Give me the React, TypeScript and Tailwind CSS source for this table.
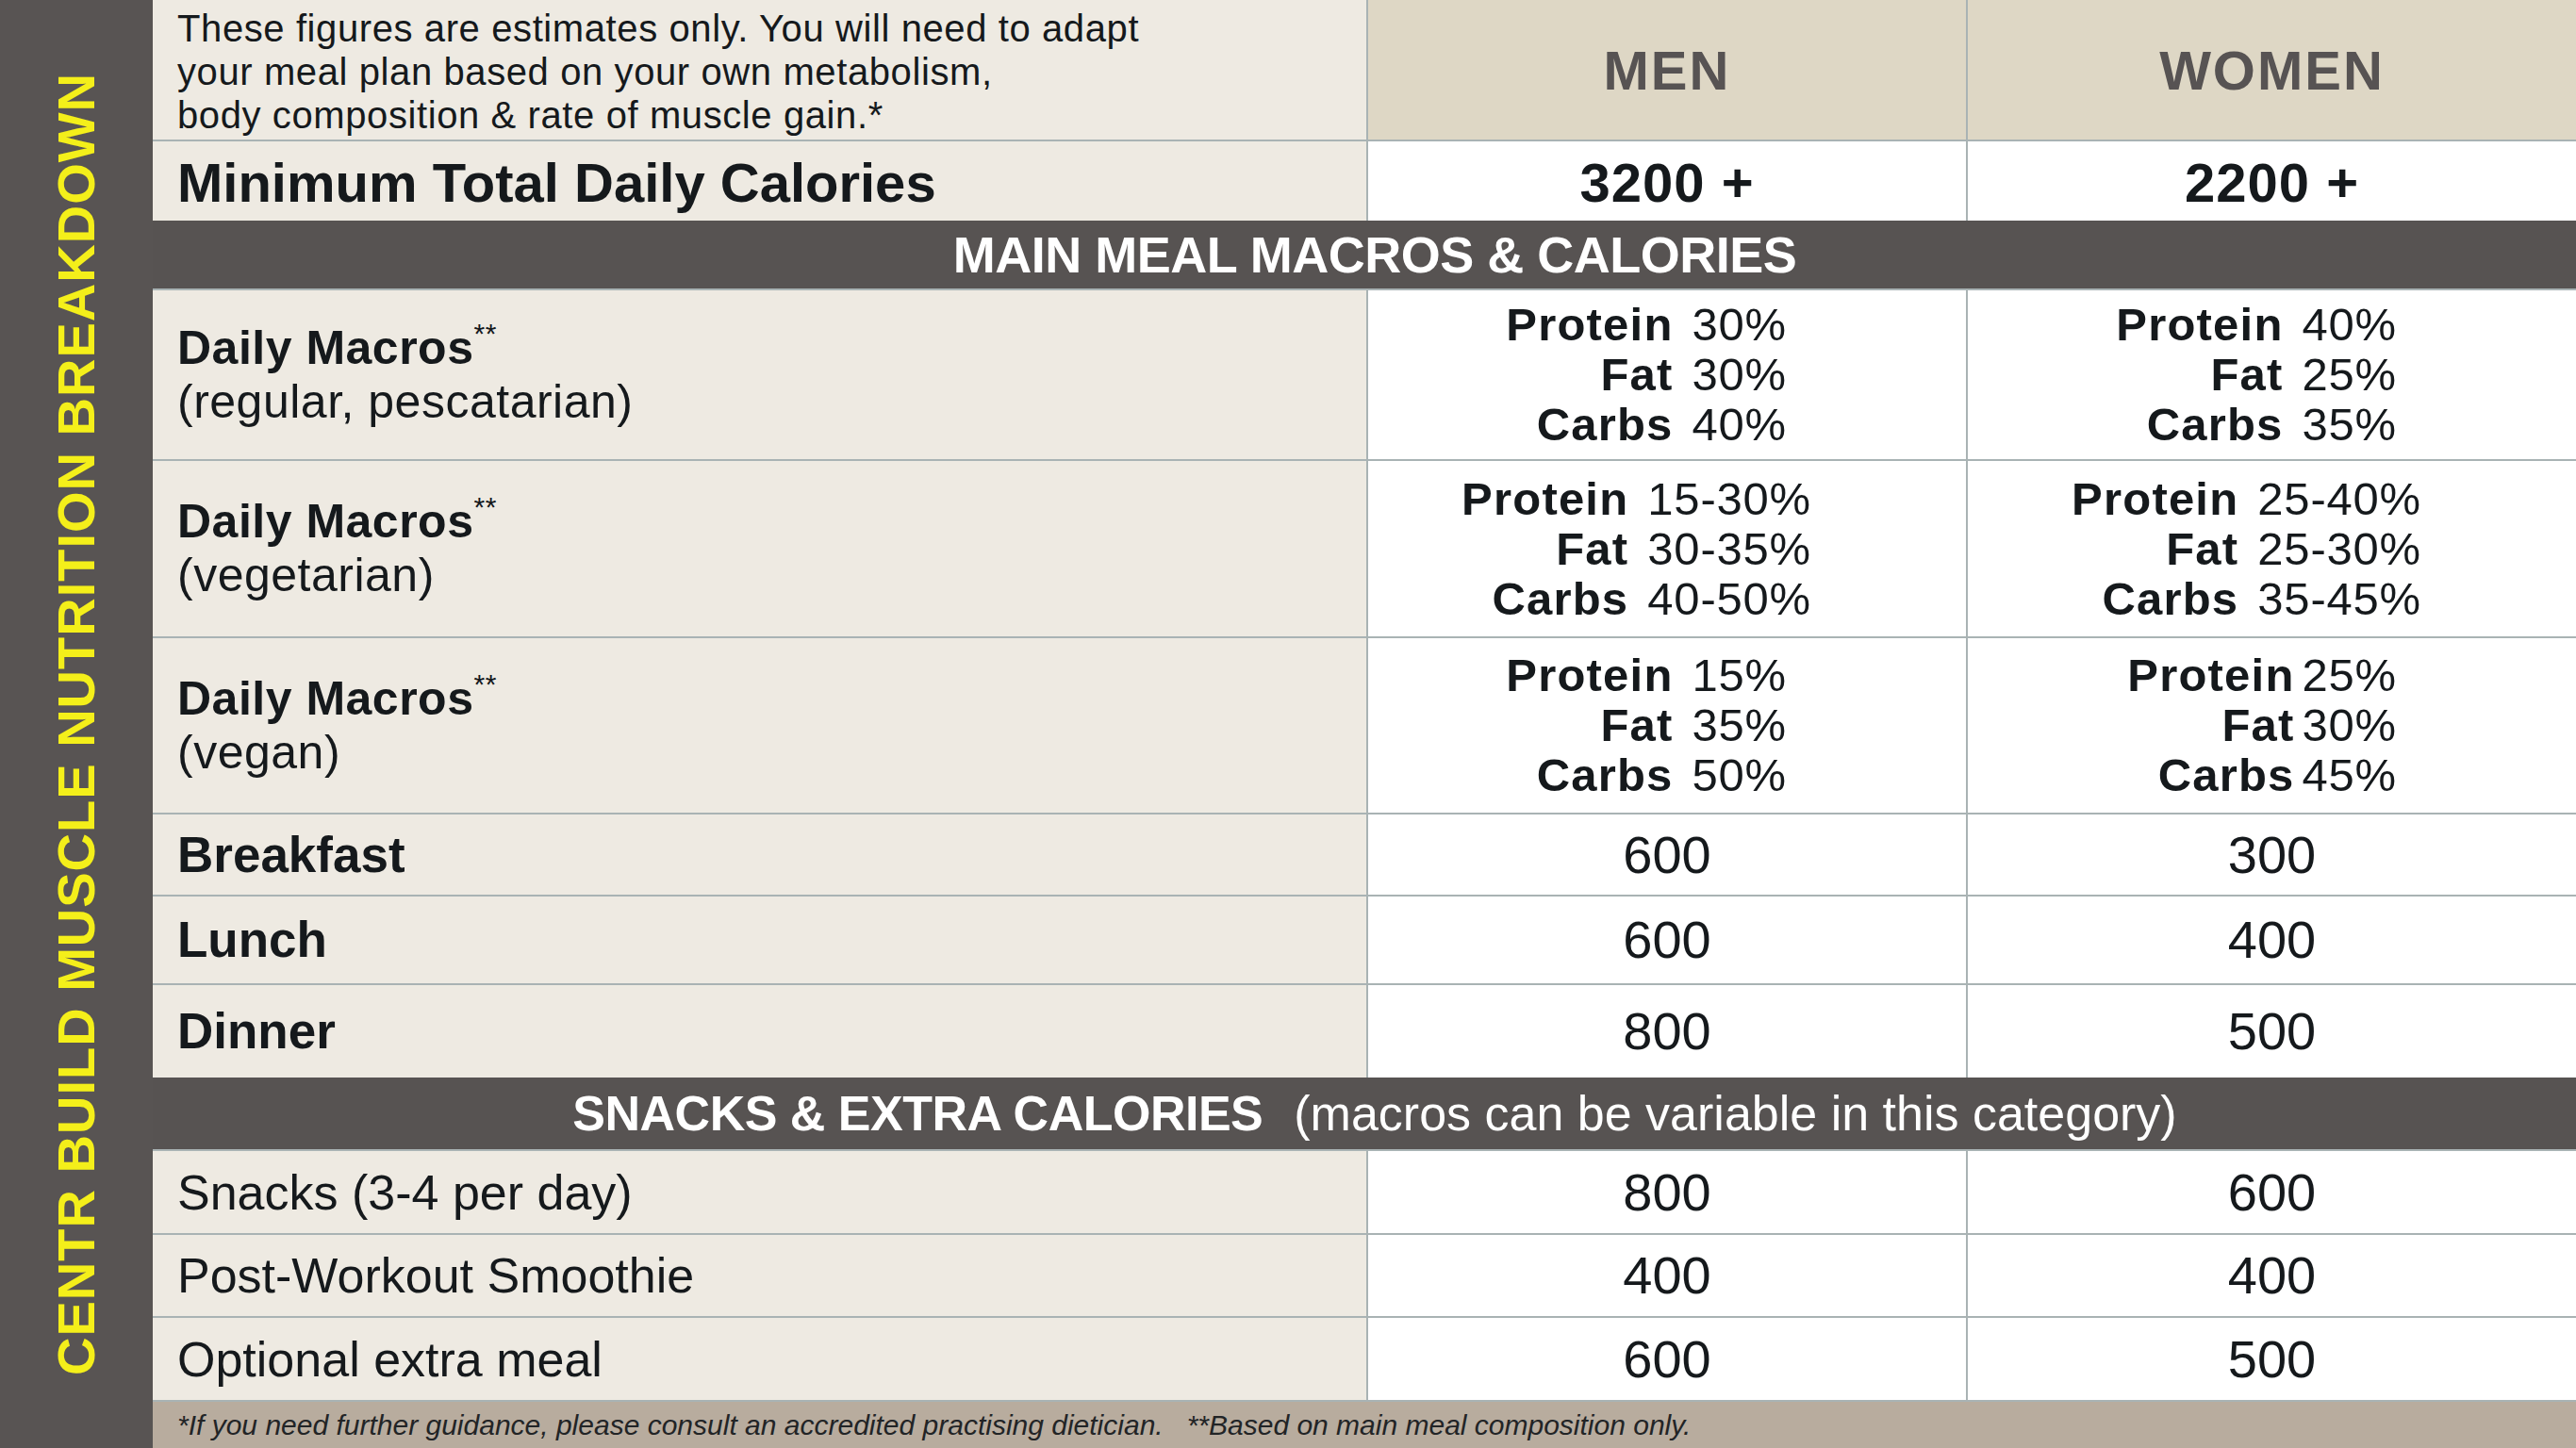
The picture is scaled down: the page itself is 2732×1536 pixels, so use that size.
import React from 'react';

interface MacroLine {
  label: string;
  value: string;
}

interface MacroRow {
  diet: string;
  height: string;
  pad: string;
  gap: string;
  men: MacroLine[];
  women: MacroLine[];
  womenGap: string;
}

interface CalRow {
  label: string;
  men: string;
  women: string;
  height: string;
}

const macroRows: MacroRow[] = [
  {
    diet: '(regular, pescatarian)',
    height: 'h-[181px]',
    pad: 'pr-[190px]',
    gap: 'ml-[20px]',
    womenGap: 'ml-[20px]',
    men: [
      { label: 'Protein', value: '30%' },
      { label: 'Fat', value: '30%' },
      { label: 'Carbs', value: '40%' },
    ],
    women: [
      { label: 'Protein', value: '40%' },
      { label: 'Fat', value: '25%' },
      { label: 'Carbs', value: '35%' },
    ],
  },
  {
    diet: '(vegetarian)',
    height: 'h-[188px]',
    pad: 'pr-[164px]',
    gap: 'ml-[20px]',
    womenGap: 'ml-[20px]',
    men: [
      { label: 'Protein', value: '15-30%' },
      { label: 'Fat', value: '30-35%' },
      { label: 'Carbs', value: '40-50%' },
    ],
    women: [
      { label: 'Protein', value: '25-40%' },
      { label: 'Fat', value: '25-30%' },
      { label: 'Carbs', value: '35-45%' },
    ],
  },
  {
    diet: '(vegan)',
    height: 'h-[187px]',
    pad: 'pr-[190px]',
    gap: 'ml-[20px]',
    womenGap: 'ml-[8px]',
    men: [
      { label: 'Protein', value: '15%' },
      { label: 'Fat', value: '35%' },
      { label: 'Carbs', value: '50%' },
    ],
    women: [
      { label: 'Protein', value: '25%' },
      { label: 'Fat', value: '30%' },
      { label: 'Carbs', value: '45%' },
    ],
  },
];

const mealRows: CalRow[] = [
  { label: 'Breakfast', men: '600', women: '300', height: 'h-[87px]' },
  { label: 'Lunch', men: '600', women: '400', height: 'h-[94px]' },
  { label: 'Dinner', men: '800', women: '500', height: 'h-[98px]' },
];

const snackRows: CalRow[] = [
  { label: 'Snacks (3-4 per day)', men: '800', women: '600', height: 'h-[89px]' },
  { label: 'Post-Workout Smoothie', men: '400', women: '400', height: 'h-[88px]' },
  { label: 'Optional extra meal', men: '600', women: '500', height: 'h-[89px]' },
];

const rowGrid = 'grid grid-cols-[1289px_636px_1fr] border-b-2 border-[#a9b3b4]';
const labelCell = 'bg-[#eeeae2] border-r-2 border-[#a9b3b4] pl-[26px] flex items-center';
const valueCell = 'bg-white flex items-center justify-center';

const MacroCell = ({ lines, pad, gap, last }: { lines: MacroLine[]; pad: string; gap: string; last?: boolean }) => (
  <div className={`bg-white flex flex-col items-end justify-center text-[49px] leading-[53px] ${pad} ${last ? '' : 'border-r-2 border-[#a9b3b4]'}`}>
    {lines.map((l) => (
      <div key={l.label} className="whitespace-nowrap">
        <span className="font-bold tracking-[1.2px]">{l.label}</span>
        <span className={`${gap} tracking-[0.8px]`}>{l.value}</span>
      </div>
    ))}
  </div>
);

export default function App() {
  return (
    <div className="w-[2732px] h-[1536px] flex overflow-hidden font-['Liberation_Sans',Arial,sans-serif] text-[#15191c]">
      {/* side title */}
      <div className="w-[162px] shrink-0 bg-[#585453] flex items-center justify-center">
        <span className="[writing-mode:vertical-rl] rotate-180 text-[#f4ef1a] font-bold text-[56px] leading-none tracking-[1px] whitespace-nowrap">
          CENTR BUILD MUSCLE NUTRITION BREAKDOWN
        </span>
      </div>

      <div className="flex-1 flex flex-col">
        {/* header */}
        <div className={`${rowGrid} h-[150px]`}>
          <div className={`${labelCell} text-[40px] leading-[46px] tracking-[0.6px]`}>
            <p className="pt-[4px]">
              These figures are estimates only. You will need to adapt
              <br />
              your meal plan based on your own metabolism,
              <br />
              body composition &amp; rate of muscle gain.*
            </p>
          </div>
          <div className="bg-[#ded7c5] border-r-2 border-[#a9b3b4] flex items-center justify-center text-[#575353] font-bold text-[58px] tracking-[2px]">
            MEN
          </div>
          <div className="bg-[#ded7c5] flex items-center justify-center text-[#575353] font-bold text-[58px] tracking-[2px]">
            WOMEN
          </div>
        </div>

        {/* minimum calories */}
        <div className="grid grid-cols-[1289px_636px_1fr] h-[84px]">
          <div className={`${labelCell} font-bold text-[58px]`}>Minimum Total Daily Calories</div>
          <div className={`${valueCell} border-r-2 border-[#a9b3b4] font-bold text-[58px] tracking-[1px]`}>3200 +</div>
          <div className={`${valueCell} font-bold text-[58px] tracking-[1px]`}>2200 +</div>
        </div>

        <div className="h-[74px] bg-[#575352] border-b-2 border-[#a9b3b4] flex items-center justify-center text-white">
          <span className="font-bold text-[54px] tracking-[-0.5px] pl-[22px]">MAIN MEAL MACROS &amp; CALORIES</span>
        </div>

        {macroRows.map((r) => (
          <div key={r.diet} className={`${rowGrid} ${r.height}`}>
            <div className={`${labelCell} text-[50px] leading-[57px] tracking-[0.5px]`}>
              <div>
                <div>
                  <span className="font-bold">Daily Macros</span>
                  <sup className="text-[30px] top-[-22px]">**</sup>
                </div>
                <div>{r.diet}</div>
              </div>
            </div>
            <MacroCell lines={r.men} pad={r.pad} gap={r.gap} />
            <MacroCell lines={r.women} pad={r.pad} gap={r.womenGap} last />
          </div>
        ))}

        {mealRows.map((r, i) => (
          <div
            key={r.label}
            className={`grid grid-cols-[1289px_636px_1fr] ${r.height} ${i < mealRows.length - 1 ? 'border-b-2 border-[#a9b3b4]' : ''}`}
          >
            <div className={`${labelCell} font-bold text-[53px]`}>{r.label}</div>
            <div className={`${valueCell} border-r-2 border-[#a9b3b4] text-[56px]`}>{r.men}</div>
            <div className={`${valueCell} text-[56px]`}>{r.women}</div>
          </div>
        ))}

        <div className="h-[78px] bg-[#575352] border-b-2 border-[#a9b3b4] flex items-center justify-center text-white">
          <span className="font-bold text-[52px] tracking-[-0.5px] pl-[22px]">SNACKS &amp; EXTRA CALORIES</span>
          <span className="ml-[33px] text-[52px]">(macros can be variable in this category)</span>
        </div>

        {snackRows.map((r) => (
          <div key={r.label} className={`${rowGrid} ${r.height}`}>
            <div className={`${labelCell} text-[52px]`}>{r.label}</div>
            <div className={`${valueCell} border-r-2 border-[#a9b3b4] text-[56px]`}>{r.men}</div>
            <div className={`${valueCell} text-[56px]`}>{r.women}</div>
          </div>
        ))}

        {/* footnotes */}
        <div className="flex-1 bg-[#b8ac9e] flex items-center pl-[26px] italic text-[30px] text-[#222426] whitespace-pre">
          {'*If you need further guidance, please consult an accredited practising dietician.   **Based on main meal composition only.'}
        </div>
      </div>
    </div>
  );
}
